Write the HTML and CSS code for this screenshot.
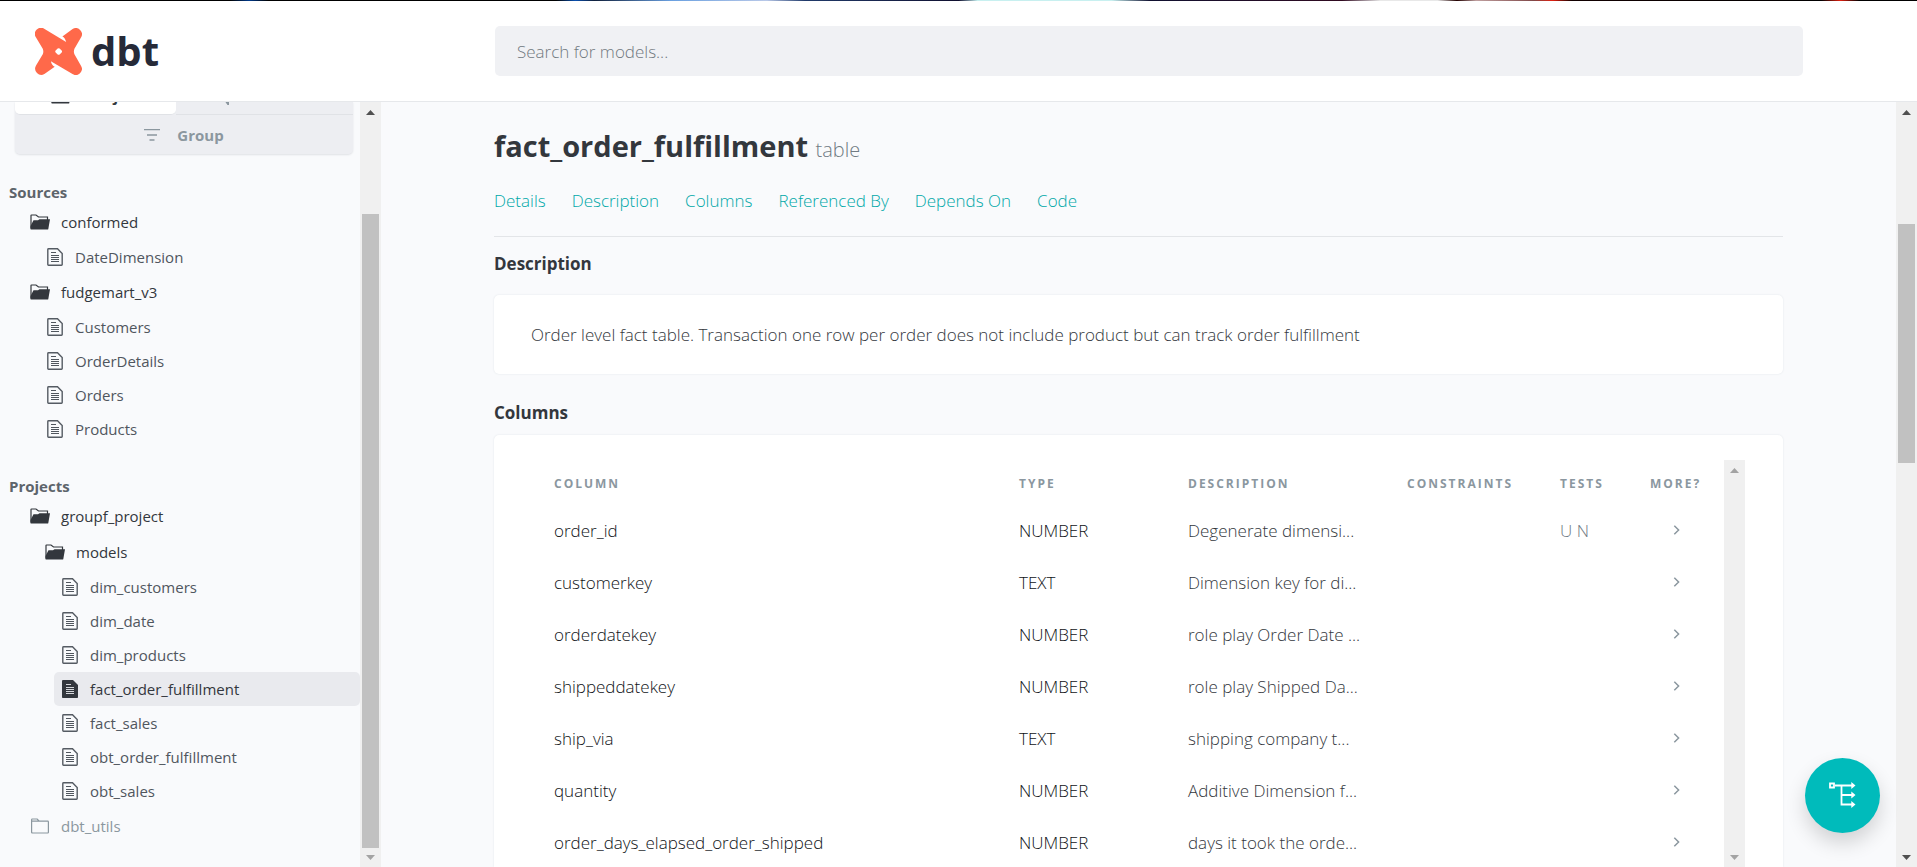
FILE: index.html
```html
<!DOCTYPE html>
<html lang="en">
<head>
<meta charset="utf-8">
<title>dbt Docs</title>
<link rel="stylesheet" href="styles.css">
</head>
<body>
<svg class="sprite" aria-hidden="true">
  <symbol id="folder-open" viewBox="0 0 20 16"><path d="M1 14.500V1.500Q1 1 1.500 1H6L8.500 3H17.500V6.500" fill="none" stroke="#33373d" stroke-width="1.200"/><path d="M.5 15V12L3.500 6.300H8L9.500 5.300H20L18.300 15Q18.200 15.600 17.500 15.600H1.500Q.5 15.600 .5 15Z" fill="#33373d"/></symbol>
  <symbol id="folder" viewBox="0 0 20 16"><path d="M1.600 14V1.700Q1.600 1 2.300 1H7.200L9.200 3.200H17.700Q18.400 3.200 18.400 3.900V14.300Q18.400 15 17.700 15H2.600Q1.600 15 1.600 14ZM2 3.200H9" fill="none" stroke="#8b979f" stroke-width="1.200"/></symbol>
  <symbol id="file" viewBox="0 0 16 18"><path d="M1.700.8H10.500L15.200 5.500V16.500Q15.200 17.200 14.500 17.200H1.500Q.8 17.200 .8 16.500V1.500Q.8.8 1.700.8Z" fill="none" stroke="#555b63" stroke-width="1.400"/><path d="M4 4.500H9M4 7.500H12M4 9.500H12M4 11.500H12M4 13.500H12" stroke="#50565e" stroke-width="1"/></symbol>
  <symbol id="file-solid" viewBox="0 0 16 18"><path d="M1 0H11L16 5V17.200Q16 18 15.200 18H.8Q0 18 0 17.200V1Q0 0 1 0Z" fill="#33373d"/><path d="M4 4.500H9M4 7.500H12M4 9.500H12M4 11.500H12M4 13.500H12" stroke="#d5d7db" stroke-width="1"/></symbol>
  <symbol id="chevron" viewBox="0 0 8 10"><path d="M1.300.7L5.600 5L1.300 9.300" fill="none" stroke="#8b979f" stroke-width="1.500"/></symbol>
  <symbol id="arrow" viewBox="0 0 9 5"><path d="M0 5L4.500 0L9 5Z" fill="currentColor"/></symbol>
</svg>

<div class="topline"></div>
<header class="header">
  <a class="logo" href="#">
    <svg class="logo-mark" viewBox="0 0 46 46" aria-hidden="true"><path fill="#ff694a" fill-rule="evenodd" d="M9.400.9L30.500 13.700Q29.500 9.500 26.800 8.200L36.800 1A6 6 0 0 1 45 9.300L38.600 20.300Q37.500 23 38.600 25.700L45 36.900A6 6 0 0 1 36.700 45.100L15.500 32.500Q16.500 36.800 19.300 38L9.200 45A6 6 0 0 1 1 36.800L7.600 25.700Q8.700 23 7.600 20.300L1 9.200A6 6 0 0 1 9.400.9ZM22.200 20.100L20.200 22.100Q19.400 23 20.200 23.900L22.200 25.900Q23.200 26.700 24.100 25.900L26.100 23.900Q26.900 23 26.100 22.100L24.100 20.100Q23.200 19.300 22.200 20.100Z"/></svg>
    <span class="logo-text">dbt</span>
  </a>
  <input class="search" type="search" aria-label="Search for models" placeholder="Search for models...">
</header>

<div class="layout">
  <nav class="sidebar" aria-label="Models">
    <div class="sidebar-body">
      <div class="switches">
        <div class="tabs">
          <button class="tab tab-active"><svg class="icon-folder"><use href="#folder-open"/></svg>Project</button>
          <button class="tab"><svg class="icon-db" viewBox="0 0 12 18" aria-hidden="true"><path d="M1 2H11V14H7L9 17V14M1 14H5" fill="none" stroke="#8b979f" stroke-width="2"/></svg>Database</button>
        </div>
        <button class="tab tab-group"><svg class="icon-group" viewBox="0 0 16 12" aria-hidden="true"><path d="M0 .5H16M3 6H13M5.500 11H10.500" stroke="#8b979f" stroke-width="1.300"/></svg>Group</button>
      </div>

      <h2 class="tree-title">Sources</h2>
      <ul class="tree">
        <li><a class="node folder" href="#"><svg class="icon-folder"><use href="#folder-open"/></svg>conformed</a></li>
        <li><a class="node file level-1" href="#"><svg class="icon-file"><use href="#file"/></svg>DateDimension</a></li>
        <li><a class="node folder" href="#"><svg class="icon-folder"><use href="#folder-open"/></svg>fudgemart_v3</a></li>
        <li><a class="node file level-1" href="#"><svg class="icon-file"><use href="#file"/></svg>Customers</a></li>
        <li><a class="node file level-1" href="#"><svg class="icon-file"><use href="#file"/></svg>OrderDetails</a></li>
        <li><a class="node file level-1" href="#"><svg class="icon-file"><use href="#file"/></svg>Orders</a></li>
        <li><a class="node file level-1" href="#"><svg class="icon-file"><use href="#file"/></svg>Products</a></li>
      </ul>

      <h2 class="tree-title">Projects</h2>
      <ul class="tree">
        <li><a class="node folder" href="#"><svg class="icon-folder"><use href="#folder-open"/></svg>groupf_project</a></li>
        <li><a class="node folder level-1" href="#"><svg class="icon-folder"><use href="#folder-open"/></svg>models</a></li>
        <li><a class="node file level-2" href="#"><svg class="icon-file"><use href="#file"/></svg>dim_customers</a></li>
        <li><a class="node file level-2" href="#"><svg class="icon-file"><use href="#file"/></svg>dim_date</a></li>
        <li><a class="node file level-2" href="#"><svg class="icon-file"><use href="#file"/></svg>dim_products</a></li>
        <li><a class="node file level-2 active" href="#" aria-current="page"><svg class="icon-file"><use href="#file-solid"/></svg>fact_order_fulfillment</a></li>
        <li><a class="node file level-2" href="#"><svg class="icon-file"><use href="#file"/></svg>fact_sales</a></li>
        <li><a class="node file level-2" href="#"><svg class="icon-file"><use href="#file"/></svg>obt_order_fulfillment</a></li>
        <li><a class="node file level-2" href="#"><svg class="icon-file"><use href="#file"/></svg>obt_sales</a></li>
        <li><a class="node folder muted" href="#"><svg class="icon-folder"><use href="#folder"/></svg>dbt_utils</a></li>
      </ul>
    </div>
    <div class="scrollbar" aria-hidden="true">
      <svg class="arrow"><use href="#arrow"/></svg>
      <div class="track track-side"><div class="thumb"></div></div>
      <svg class="arrow arrow-down arrow-dim"><use href="#arrow"/></svg>
    </div>
  </nav>

  <main class="main">
    <div class="content">
      <h1 class="title">fact_order_fulfillment <small class="kind">table</small></h1>
      <div class="links">
        <a href="#">Details</a>
        <a href="#">Description</a>
        <a href="#">Columns</a>
        <a href="#">Referenced By</a>
        <a href="#">Depends On</a>
        <a href="#">Code</a>
      </div>
      <section>
        <h2 class="section-title">Description</h2>
        <div class="panel panel-text">Order level fact table. Transaction one row per order does not include product but can track order fulfillment</div>
      </section>
      <section class="columns">
        <h2 class="section-title">Columns</h2>
        <div class="panel panel-table">
          <table class="table">
            <colgroup><col class="c-name"><col class="c-type"><col class="c-desc"><col class="c-cons"><col class="c-tests"><col class="c-more"></colgroup>
            <thead>
              <tr><th>Column</th><th>Type</th><th>Description</th><th>Constraints</th><th>Tests</th><th>More?</th></tr>
            </thead>
            <tbody>
              <tr><td>order_id</td><td>NUMBER</td><td>Degenerate dimensi...</td><td></td><td>U N</td><td><svg class="chevron"><use href="#chevron"/></svg></td></tr>
              <tr><td>customerkey</td><td>TEXT</td><td>Dimension key for di...</td><td></td><td></td><td><svg class="chevron"><use href="#chevron"/></svg></td></tr>
              <tr><td>orderdatekey</td><td>NUMBER</td><td>role play Order Date ...</td><td></td><td></td><td><svg class="chevron"><use href="#chevron"/></svg></td></tr>
              <tr><td>shippeddatekey</td><td>NUMBER</td><td>role play Shipped Da...</td><td></td><td></td><td><svg class="chevron"><use href="#chevron"/></svg></td></tr>
              <tr><td>ship_via</td><td>TEXT</td><td>shipping company t...</td><td></td><td></td><td><svg class="chevron"><use href="#chevron"/></svg></td></tr>
              <tr><td>quantity</td><td>NUMBER</td><td>Additive Dimension f...</td><td></td><td></td><td><svg class="chevron"><use href="#chevron"/></svg></td></tr>
              <tr><td>order_days_elapsed_order_shipped</td><td>NUMBER</td><td>days it took the orde...</td><td></td><td></td><td><svg class="chevron"><use href="#chevron"/></svg></td></tr>
            </tbody>
          </table>
          <div class="scrollbar scrollbar-dim" aria-hidden="true">
            <svg class="arrow"><use href="#arrow"/></svg>
            <div class="track"></div>
            <svg class="arrow arrow-down"><use href="#arrow"/></svg>
          </div>
        </div>
      </section>
    </div>
    <div class="scrollbar" aria-hidden="true">
      <svg class="arrow"><use href="#arrow"/></svg>
      <div class="track track-main"><div class="thumb"></div></div>
      <svg class="arrow arrow-down"><use href="#arrow"/></svg>
    </div>
  </main>
</div>

<button class="fab" aria-label="View lineage graph">
  <svg viewBox="0 0 27 27" aria-hidden="true"><path d="M1 1.500H5V5.500H1ZM6 3.500H23M12.500 3.500V22.500H23M12.500 13H23" fill="none" stroke="#fff" stroke-width="1.800"/><path d="M22.300 0L26.500 3.500L22.300 7ZM22.300 9.500L26.500 13L22.300 16.500ZM22.300 19L26.500 22.500L22.300 26Z" fill="#fff"/></svg>
</button>
</body>
</html>
```

FILE: styles.css
```css
* {
  box-sizing: border-box;
}

body {
  margin: 0;
  height: 100vh;
  display: flex;
  flex-direction: column;
  overflow: hidden;
  background: #f9fafc;
  color: #33373d;
  font-family: "Open Sans", "Noto Sans", sans-serif;
  font-size: 17px;
}

button,
input {
  font: inherit;
}

a {
  color: inherit;
  text-decoration: none;
}

.sprite {
  display: none;
}

/* Header */
.topline {
  flex: none;
  height: 1px;
  background: linear-gradient(90deg, #000 12%, #003a8c 13%, #000 14%, #000 29%, #0a50b0 30%, #10203c 31%, #6aa0e0 35%, #b8c8e8 40%, #203a6a 42%, #101030 50%, #c8f0f0 51%, #c8f0f0 58%, #101030 60%, #300a20 70%, #e8e8e8 72%, #e8e8e8 75%, #200 76%, #c0a0a0 77%, #804848 80%, #e02010 81%, #100 82%, #000 95%, #e02010 96%, #000 97%);
}

.header {
  flex: none;
  display: flex;
  align-items: center;
  height: 101px;
  padding: 0 114px 0 35px;
  background: #fff;
  border-bottom: 1px solid #e6e8eb;
}

.logo {
  flex: none;
  display: flex;
  align-items: center;
  gap: 9px;
  width: 460px;
}

.logo-mark {
  width: 47px;
  height: 47px;
}

.logo-text {
  color: #262a38;
  font-size: 40px;
  font-weight: 700;
  line-height: 48px;
}

.search {
  flex: 1;
  min-width: 0;
  height: 50px;
  padding: 0 22px;
  border: 0;
  border-radius: 5px;
  background: #f0f1f4;
  color: #33373d;
  font-weight: 300;
}

.search::placeholder {
  color: #70797f;
}

/* Page frame */
.layout {
  flex: 1;
  min-height: 0;
  display: flex;
}

.sidebar {
  flex: none;
  display: flex;
  width: 381px;
}

.sidebar-body {
  flex: 1;
  overflow: hidden;
  font-size: 15px;
}

.main {
  flex: 1;
  min-width: 0;
  display: flex;
}

.content {
  flex: 1;
  min-width: 0;
  display: flex;
  flex-direction: column;
  padding: 22px 113px 0;
}

/* Sidebar switches */
.switches {
  margin: 0 7px 0 15px;
  overflow: hidden;
  border-radius: 0 0 5px 5px;
  background: #edeef2;
  box-shadow: 0 1px 2px #dfe1e5;
}

.tabs {
  display: flex;
  align-items: flex-end;
  height: 13px;
  overflow: hidden;
}

.tab {
  flex: 1;
  display: flex;
  align-items: center;
  gap: 17px;
  height: 37px;
  padding: 0 36px;
  border: 0;
  border-bottom: 1px solid #e0e2e6;
  background: #edeef2;
  color: #8b979f;
  font-weight: 700;
}

.tabs .tab-active {
  flex: none;
  width: 161px;
  border-radius: 0 0 5px 5px;
  background: #fff;
  color: #33373d;
}

.tab-group {
  justify-content: center;
  width: 100%;
  height: 39px;
  border: 0;
}

.icon-group {
  width: 16px;
  height: 12px;
}

.icon-db {
  width: 12px;
  height: 18px;
  margin-left: 7px;
}

/* Sidebar tree */
.tree-title {
  margin: 26px 0 0 9px;
  font-size: 15px;
  font-weight: 700;
  line-height: 24px;
  color: #5d646b;
}

.tree {
  margin: 0 0 28px;
  padding: 0 0 0 24px;
  list-style: none;
}

.node {
  display: flex;
  align-items: center;
  height: 34px;
  padding-left: 8px;
  border-radius: 5px;
  color: #50565e;
}

.folder {
  gap: 11px;
  height: 36px;
  padding-left: 6px;
  color: #33373d;
}

.file {
  gap: 12px;
}

.level-1 {
  margin-left: 15px;
}

.level-2 {
  margin-left: 30px;
}

.active {
  background: #e9eaee;
  color: #33373d;
}

.muted {
  color: #8b979f;
}

.icon-folder {
  flex: none;
  width: 20px;
  height: 16px;
}

.icon-file {
  flex: none;
  width: 16px;
  height: 18px;
}

/* Scroll bars */
.scrollbar {
  flex: none;
  display: flex;
  flex-direction: column;
  align-items: center;
  width: 21px;
  padding: 8px 2px 7px;
  background: #f0f0f0;
  color: #505050;
}

.scrollbar-dim,
.arrow-dim {
  color: #a3a3a3;
}

.arrow {
  flex: none;
  width: 9px;
  height: 5px;
}

.arrow-down {
  transform: rotate(180deg);
}

.track {
  flex: 1;
  display: grid;
  width: 100%;
  margin: 4px 0;
}

.track-side {
  grid-template-rows: 95fr 635fr 3fr;
}

.track-main {
  grid-template-rows: 105fr 240fr 390fr;
}

.thumb {
  grid-row: 2;
  background: #c1c1c1;
}

/* Article */
.title {
  margin: 0;
  font-size: 29px;
  font-weight: 700;
  line-height: 44px;
}

.kind {
  font-size: 20px;
  font-weight: 300;
  color: #707b83;
}

.links {
  display: flex;
  gap: 26px;
  padding: 16px 0 23px;
  border-bottom: 1px solid #e3e5e8;
  font-weight: 300;
  line-height: 25px;
  color: #00a8a8;
}

.section-title {
  margin: 14px 0 18px;
  font-size: 17px;
  font-weight: 700;
  line-height: 26px;
}

.panel {
  border-radius: 5px;
  background: #fff;
  box-shadow: 0 0 2px #dfe3e8;
  font-weight: 300;
}

.panel-text {
  padding: 26px 37px;
  line-height: 27px;
  color: #33373d;
}

.columns {
  flex: 1;
  min-height: 0;
  display: flex;
  flex-direction: column;
  padding-top: 12px;
}

.columns .section-title {
  margin-bottom: 9px;
}

.panel-table {
  flex: 1;
  min-height: 0;
  display: flex;
  align-items: stretch;
  overflow: hidden;
  padding: 25px 38px 0 43px;
  border-radius: 5px 5px 0 0;
}

.table {
  flex: 1;
  table-layout: fixed;
  align-self: flex-start;
  border-collapse: collapse;
  color: #101317;
}

.c-type {
  width: 169px;
}

.c-desc {
  width: 219px;
}

.c-cons {
  width: 153px;
}

.c-tests {
  width: 90px;
}

.c-more {
  width: 91px;
}

.table th {
  height: 44px;
  padding: 2px 0 0 17px;
  font-size: 12px;
  font-weight: 700;
  letter-spacing: 2px;
  text-align: left;
  text-transform: uppercase;
  color: #8b979f;
}

.table td {
  height: 52px;
  padding: 0 0 0 17px;
  white-space: nowrap;
}

.table td:nth-child(3) {
  color: #33373d;
}

.table td:nth-child(5) {
  color: #707b83;
}

.table td:nth-child(6) {
  padding-left: 40px;
}

.chevron {
  display: block;
  width: 8px;
  height: 10px;
}

/* Floating graph button */
.fab {
  position: fixed;
  right: 37px;
  bottom: 34px;
  display: grid;
  place-items: center;
  width: 75px;
  height: 75px;
  border: 0;
  border-radius: 50%;
  background: #00bbbb;
  box-shadow: 0 10px 20px rgba(0, 0, 0, 0.16);
}

.fab svg {
  width: 27px;
  height: 27px;
}
```
